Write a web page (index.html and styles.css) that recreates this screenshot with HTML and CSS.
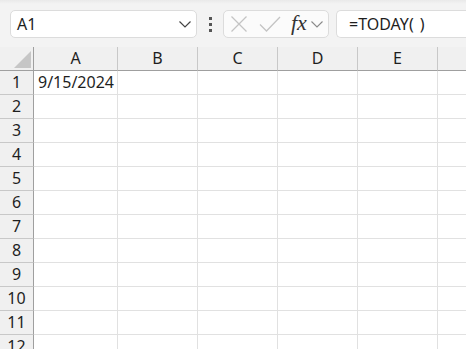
FILE: index.html
```html
<!DOCTYPE html>
<html>
<head>
<meta charset="utf-8">
<link rel="stylesheet" href="styles.css">
</head>
<body>
<div class="toolbar">
  <div class="namebox">
    <span class="name">A1</span>
    <svg class="chev" width="12" height="7" viewBox="0 0 12 7"><path d="M0.5 0.5 L6 6 L11.5 0.5" fill="none" stroke="#444" stroke-width="1.2"/></svg>
  </div>
  <div class="dots"><span></span><span></span><span></span></div>
  <div class="fxbox">
    <svg class="ico" width="18" height="16" viewBox="0 0 18 16"><path d="M1.5 0.5 L16.5 15.5 M16.5 0.5 L1.5 15.5" fill="none" stroke="#c4c4c4" stroke-width="1.3"/></svg>
    <svg class="ico" width="22" height="16" viewBox="0 0 22 16"><path d="M1 8.5 L7.5 15 L21 1" fill="none" stroke="#c4c4c4" stroke-width="1.3"/></svg>
    <span class="fx">fx</span>
    <svg class="chev2" width="12" height="7" viewBox="0 0 12 7"><path d="M0.5 0.5 L6 6 L11.5 0.5" fill="none" stroke="#8a8a8a" stroke-width="1.1"/></svg>
  </div>
  <div class="formula">=TODAY<span class="paren">( )</span></div>
</div>
<div class="grid">
  <div class="corner"><svg width="17" height="17" viewBox="0 0 17 17"><polygon points="17,0 17,17 0,17" fill="#c6c6c6"/></svg></div>
  <div class="ch">A</div><div class="ch">B</div><div class="ch">C</div><div class="ch">D</div><div class="ch">E</div><div class="ch last"></div>

  <div class="rh">1</div><div class="c val">9/15/2024</div><div class="c"></div><div class="c"></div><div class="c"></div><div class="c"></div><div class="c"></div>
  <div class="rh">2</div><div class="c"></div><div class="c"></div><div class="c"></div><div class="c"></div><div class="c"></div><div class="c"></div>
  <div class="rh">3</div><div class="c"></div><div class="c"></div><div class="c"></div><div class="c"></div><div class="c"></div><div class="c"></div>
  <div class="rh">4</div><div class="c"></div><div class="c"></div><div class="c"></div><div class="c"></div><div class="c"></div><div class="c"></div>
  <div class="rh">5</div><div class="c"></div><div class="c"></div><div class="c"></div><div class="c"></div><div class="c"></div><div class="c"></div>
  <div class="rh">6</div><div class="c"></div><div class="c"></div><div class="c"></div><div class="c"></div><div class="c"></div><div class="c"></div>
  <div class="rh">7</div><div class="c"></div><div class="c"></div><div class="c"></div><div class="c"></div><div class="c"></div><div class="c"></div>
  <div class="rh">8</div><div class="c"></div><div class="c"></div><div class="c"></div><div class="c"></div><div class="c"></div><div class="c"></div>
  <div class="rh">9</div><div class="c"></div><div class="c"></div><div class="c"></div><div class="c"></div><div class="c"></div><div class="c"></div>
  <div class="rh">10</div><div class="c"></div><div class="c"></div><div class="c"></div><div class="c"></div><div class="c"></div><div class="c"></div>
  <div class="rh">11</div><div class="c"></div><div class="c"></div><div class="c"></div><div class="c"></div><div class="c"></div><div class="c"></div>
  <div class="rh">12</div><div class="c"></div><div class="c"></div><div class="c"></div><div class="c"></div><div class="c"></div><div class="c"></div>
</div>
</body>
</html>
```

FILE: styles.css
```css
html, body {
  margin: 0;
  padding: 0;
}
body {
  width: 466px;
  height: 349px;
  overflow: hidden;
  background: #ffffff;
  font-family: "Noto Sans", "Open Sans", sans-serif;
  color: #1e1e1e;
}
.toolbar {
  height: 47px;
  box-sizing: border-box;
  padding: 10px 0 0 10px;
  display: flex;
  align-items: flex-start;
  background: linear-gradient(#e9e9e9 0px, #f3f3f3 4px, #f3f3f3 100%);
  white-space: nowrap;
  overflow: hidden;
}
.namebox {
  flex: 0 0 187px;
  height: 28px;
  box-sizing: border-box;
  background: #fff;
  border: 1px solid #dcdcdc;
  border-radius: 5px;
  display: flex;
  align-items: center;
  padding: 0 5px 0 6px;
}
.name {
  flex: 1;
  font-size: 16px;
}
.chev {
  margin-top: 1px;
}
.dots {
  flex: 0 0 26px;
  height: 28px;
  display: flex;
  flex-direction: column;
  align-items: center;
  justify-content: center;
  gap: 3px;
}
.dots span {
  width: 3px;
  height: 3px;
  background: #555;
}
.fxbox {
  flex: 0 0 106px;
  height: 28px;
  box-sizing: border-box;
  background: #fbfbfb;
  border: 1px solid #dcdcdc;
  border-radius: 5px;
  display: flex;
  align-items: center;
  padding: 0 0 0 6px;
}
.fxbox .ico:first-child {
  margin-right: 11px;
}
.fx {
  font-family: "Liberation Serif", serif;
  font-style: italic;
  font-size: 22px;
  color: #333;
  margin-left: 10px;
  margin-right: 4px;
  line-height: 1;
  margin-top: -2px;
}
.chev2 {
  margin-top: 1px;
}
.formula {
  margin-left: 7px;
  flex: 0 0 160px;
  height: 28px;
  box-sizing: border-box;
  background: #fff;
  border: 1px solid #dcdcdc;
  border-right: none;
  border-radius: 5px 0 0 5px;
  font-size: 16px;
  line-height: 26px;
  padding-left: 12px;
}
.paren {
  letter-spacing: 1px;
}
.grid {
  display: grid;
  grid-template-columns: 34px 84px 80px 80px 80px 80px 80px;
  grid-auto-rows: 24px;
  font-size: 16px;
}
.grid > div {
  box-sizing: border-box;
}
.corner {
  background: #f0f0f0;
  border-right: 1px solid #9f9f9f;
  border-bottom: 1px solid #9f9f9f;
  display: flex;
  align-items: flex-end;
  justify-content: flex-end;
  padding: 0 2px 2px 0;
}
.corner svg {
  display: block;
}
.ch {
  background: #f0f0f0;
  border-right: 1px solid #c8c8c8;
  border-bottom: 1px solid #9f9f9f;
  text-align: center;
  line-height: 23px;
}
.rh {
  background: #f0f0f0;
  border-right: 1px solid #9f9f9f;
  border-bottom: 1px solid #c8c8c8;
  text-align: center;
  line-height: 23px;
}
.c {
  border-right: 1px solid #e1e1e1;
  border-bottom: 1px solid #e1e1e1;
}
.val {
  padding-left: 4px;
  line-height: 23px;
  white-space: nowrap;
}
```
